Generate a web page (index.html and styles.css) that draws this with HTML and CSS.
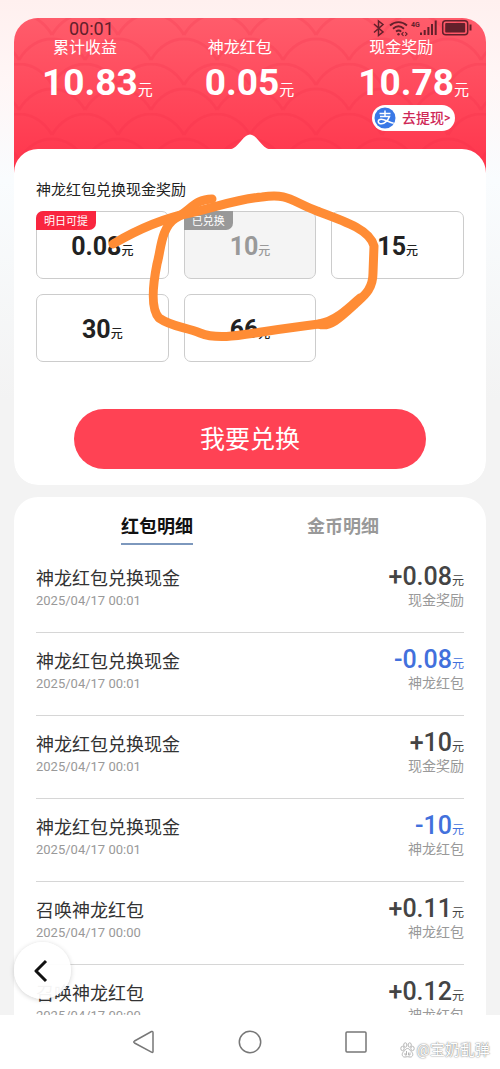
FILE: index.html
```html
<!DOCTYPE html>
<html lang="zh-CN">
<head>
<meta charset="utf-8">
<meta name="viewport" content="width=device-width, initial-scale=1">
<title>神龙红包</title>
<link rel="stylesheet" href="styles.css">
</head>
<body>
<div class="status">
  <span class="clock">00:01</span>
  <svg class="status-icons" width="100" height="20" viewBox="0 0 100 20" fill="none" stroke="#63202b" stroke-width="1.5">
    <path d="M1 6l9 8-4.500 3.500V3L10 6.500l-9 8"/>
    <path d="M17 7.500c5-4.500 12-4.500 17 0M20 10.700c3.500-3 7.500-3 11 0M23 13.600c2-1.500 3.500-1.500 5.200 0" stroke-width="1.900"/>
    <circle cx="25.500" cy="16.300" r="1.200" fill="#63202b" stroke="none"/>
    <path d="M30.500 14.200l-1.800 1.800 1.800 1.800M32.300 14.200l1.800 1.800-1.800 1.800" stroke-width="1.100"/>
    <text x="38" y="9" class="net">4G</text>
    <path d="M48 14.500V17M51.700 12V17M55.400 9V17M59 6V17M62.700 2.500V17" stroke-width="2"/>
    <rect x="69.700" y="2.700" width="25" height="14" rx="3"/>
    <rect x="72.200" y="5" width="20" height="9.500" rx="1" fill="#63202b" stroke="none"/>
    <path d="M97.500 6.500v6" stroke-width="2"/>
  </svg>
</div>

<main class="screen">
  <section class="card wallet">
    <svg class="scales" aria-hidden="true">
      <defs>
        <pattern id="scale" width="66" height="50" patternUnits="userSpaceOnUse" x="38" y="-5">
          <path d="M0 22C16-6 50-6 66 22M-33 47C-17 19 17 19 33 47M33 47C49 19 83 19 99 47" fill="none" stroke="#ed2440" stroke-opacity=".17" stroke-width="3"/>
        </pattern>
      </defs>
      <rect width="100%" height="100%" fill="url(#scale)"/>
    </svg>
    <header class="totals">
      <div class="total"><span class="label">累计收益</span><span class="sum">10.83<small>元</small></span></div>
      <div class="total middle"><span class="label">神龙红包</span><span class="sum">0.05<small>元</small></span></div>
      <div class="total">
        <span class="label">现金奖励</span><span class="sum">10.78<small>元</small></span>
        <a class="withdraw" href="#">
          <svg width="22" height="22" viewBox="0 0 22 22"><circle cx="11" cy="11" r="10.500" fill="#3978e6"/><path d="M5.500 6.500h11M11 3.500v6M6 9.500h9.500c-1.500 4-5 7.300-8 7.300-4.500 0-4-4.600-.3-4.600 3.800 0 7 2.800 12.500 4" fill="none" stroke="#fff" stroke-width="1.500"/></svg>
          <span>去提现</span><span class="more">&gt;</span>
        </a>
      </div>
    </header>
    <svg class="notch" width="48" height="16" viewBox="0 0 48 16"><path d="M0 16C11 16 14 6 20 2Q24-1 28 2C34 6 37 16 48 16Z" fill="#fff"/></svg>
    <div class="exchange">
      <h2>神龙红包兑换现金奖励</h2>
      <div class="options">
        <button type="button" class="option"><em class="tag">明日可提</em>0.08<small>元</small></button>
        <button type="button" class="option used" disabled><em class="tag">已兑换</em>10<small>元</small></button>
        <button type="button" class="option">15<small>元</small></button>
        <button type="button" class="option">30<small>元</small></button>
        <button type="button" class="option">66<small>元</small></button>
      </div>
      <button type="button" class="redeem">我要兑换</button>
    </div>
    <svg class="marker" width="280" height="170" viewBox="0 0 280 170" fill="none" stroke="#ff8c35" stroke-width="9" stroke-linecap="round" stroke-linejoin="round">
      <path d="M13 59C40 43 65 33 90 28C117 22 137 14 162 12C188 8 191 16 217 26C247 37 270 45 274 61L273 88C273 106 262 112 254 120C240 133 229 143 219 139"/>
      <path d="M112 14C95 14 90 26 76 33C61 42 61 65 57 79C53 99 50 123 59 133C72 142 85 142 100 148C123 157 150 147 219 139C236 136 249 123 260 113"/>
    </svg>
  </section>

  <section class="card history">
    <nav class="tabs">
      <button type="button" class="tab active">红包明细</button>
      <button type="button" class="tab">金币明细</button>
    </nav>
    <ul class="rows">
      <li><div><h3>神龙红包兑换现金</h3><time>2025/04/17 00:01</time></div><div class="right"><b>+0.08<small>元</small></b><span>现金奖励</span></div></li>
      <li><div><h3>神龙红包兑换现金</h3><time>2025/04/17 00:01</time></div><div class="right minus"><b>-0.08<small>元</small></b><span>神龙红包</span></div></li>
      <li><div><h3>神龙红包兑换现金</h3><time>2025/04/17 00:01</time></div><div class="right"><b>+10<small>元</small></b><span>现金奖励</span></div></li>
      <li><div><h3>神龙红包兑换现金</h3><time>2025/04/17 00:01</time></div><div class="right minus"><b>-10<small>元</small></b><span>神龙红包</span></div></li>
      <li><div><h3>召唤神龙红包</h3><time>2025/04/17 00:00</time></div><div class="right"><b>+0.11<small>元</small></b><span>神龙红包</span></div></li>
      <li><div><h3>召唤神龙红包</h3><time>2025/04/17 00:00</time></div><div class="right"><b>+0.12<small>元</small></b><span>神龙红包</span></div></li>
    </ul>
  </section>

  <button type="button" class="back" aria-label="返回"><svg width="14" height="24" viewBox="0 0 14 24"><path d="M12 2L2 12l10 10" fill="none" stroke="#111" stroke-width="3" stroke-linejoin="round"/></svg></button>
</main>

<footer class="system">
  <div class="keys">
    <button type="button" aria-label="后退"><svg width="24" height="24" viewBox="0 0 24 24"><path d="M2.500 11L19.500 1.500Q21 1 21 2.500v19Q21 23 19.500 22.200L2.500 13Q1 12 2.500 11Z"/></svg></button>
    <button type="button" aria-label="主页"><svg width="24" height="24" viewBox="0 0 24 24"><circle cx="12" cy="12" r="10.700"/></svg></button>
    <button type="button" aria-label="最近任务"><svg width="24" height="24" viewBox="0 0 24 24"><rect x="2" y="2" width="20" height="20" rx="1"/></svg></button>
  </div>
  <div class="watermark">
    <svg width="15" height="16" viewBox="0 0 15 16" fill="#fff" stroke="#b5b5b5"><ellipse cx="2.500" cy="6.500" rx="1.700" ry="2.200"/><ellipse cx="5.300" cy="3" rx="1.600" ry="2.200"/><ellipse cx="9.700" cy="3" rx="1.600" ry="2.200"/><ellipse cx="12.500" cy="6.500" rx="1.700" ry="2.200"/><path d="M7.500 6.500c2 0 2.500 2 4 3.300 2.500 2.300 1 5.700-1.500 5.200-2-.4-3-.4-5 0-2.500.5-4-2.900-1.500-5.200 1.500-1.300 2-3.300 4-3.300Z"/><path d="M6.500 9v4M5 11v2h1.500M8.500 10.500V13H10v-2.500" fill="none"/></svg>
    <span>@宝奶乱弹</span>
  </div>
</footer>
</body>
</html>
```
FILE: styles.css
```css
* { box-sizing: border-box; }

body {
  margin: 0;
  height: 100vh;
  display: flex;
  flex-direction: column;
  position: relative;
  background: #fff;
  color: #222;
  font-family: Roboto, "Noto Sans CJK SC", sans-serif;
}

h2, h3, ul { margin: 0; padding: 0; font-weight: 400; }
button { font: inherit; border: 0; padding: 0; background: none; color: inherit; }
small { line-height: 1; }
svg { flex: none; }

.status {
  position: absolute;
  z-index: 3;
  top: 18px;
  left: 69px;
  right: 27px;
  display: flex;
  justify-content: space-between;
  color: #63202b;
}
.clock { font-size: 18px; line-height: 22px; }
.net { font: 700 7px Roboto, sans-serif; fill: #63202b; stroke: none; }

.screen {
  position: relative;
  flex: 1;
  min-height: 0;
  overflow: hidden;
  padding: 18px 14px 0;
  display: flex;
  flex-direction: column;
  gap: 12px;
  background: linear-gradient(#fff0ef 0, #fff6f6 80px, #f9fcfe 180px, #f3f3f3 400px);
}

.card { position: relative; flex: none; border-radius: 24px; }

.wallet {
  overflow: hidden;
  background: linear-gradient(#ff5c6b, #ff344b) top / 100% 155px no-repeat;
}
.scales { position: absolute; top: 0; left: 0; width: 100%; height: 155px; }

.totals {
  position: relative;
  height: 131px;
  display: flex;
  justify-content: space-between;
  padding: 20px 17px 0 28px;
  color: #fff;
}
.total { display: flex; flex-direction: column; align-items: center; }
.middle { margin-right: 12px; }
.label {
  align-self: flex-start;
  margin-left: 11px;
  font-size: 16px;
  line-height: 20px;
}
.middle .label { margin-left: 3px; }
.sum {
  margin-top: 3px;
  font-size: 37px;
  font-weight: 700;
  line-height: 44px;
}
.sum small { font-size: 15px; font-weight: 400; }

.withdraw {
  display: flex;
  align-items: center;
  height: 26px;
  padding: 0 5px 0 2px;
  border-radius: 13px;
  background: #fff;
  color: #cf2857;
  font-size: 14px;
  font-weight: 500;
  line-height: 20px;
  text-decoration: none;
}
.withdraw svg { margin-right: 6px; }
.more { font-size: 12px; }

.notch { position: absolute; z-index: 1; top: 116px; left: 50%; margin-left: -24px; }

.exchange {
  position: relative;
  padding: 29px 22px 16px;
  border-radius: 24px;
  background: #fff;
  display: flex;
  flex-direction: column;
}
.exchange h2 { font-size: 15px; line-height: 24px; }

.options {
  display: grid;
  grid-template-columns: repeat(3, 1fr);
  gap: 15px;
  margin-top: 9px;
}
.option {
  position: relative;
  height: 68px;
  padding-top: 3px;
  border: 1px solid #ccc;
  border-radius: 7px;
  font-size: 25px;
  font-weight: 700;
  line-height: 36px;
}
.option small { font-size: 12px; font-weight: 500; }
.used { background: #f4f4f4; color: #999; }
.tag {
  position: absolute;
  top: -1px;
  left: -1px;
  padding: 0 8px;
  border-radius: 7px 0 7px 0;
  background: #f9263f;
  color: #fff;
  font: 400 11px/19px "Noto Sans CJK SC", sans-serif;
}
.used .tag { background: #999; }

.redeem {
  margin: 47px 38px 0;
  height: 60px;
  padding-bottom: 4px;
  border-radius: 30px;
  background: #ff4254;
  color: #fff;
  font-size: 25px;
}

.marker { position: absolute; z-index: 2; top: 167px; left: 50%; margin-left: -150px; }

.history { background: #fff; padding: 15px 22px 0; }
.tabs { display: flex; justify-content: center; gap: 114px; }
.tab {
  height: 33px;
  padding-bottom: 3px;
  font-size: 18px;
  line-height: 28px;
  font-weight: 700;
  color: #999;
}
.tab.active { padding-bottom: 1px; color: #111; border-bottom: 2px solid #7d98bd; }

.rows { list-style: none; }
.rows li {
  display: flex;
  justify-content: space-between;
  height: 83px;
  padding-top: 14px;
  border-bottom: 1px solid #d6d6d6;
}
.rows li:first-child { height: 88px; padding-top: 19px; }
.rows h3 { font-size: 18px; line-height: 30px; color: #333; }
.rows time { display: block; font-size: 13px; line-height: 14px; color: #999; }
.right { display: flex; flex-direction: column; align-items: flex-end; }
.right b { font-size: 25px; line-height: 26px; font-weight: 500; color: #444; }
.right b small { font-size: 12px; font-weight: 400; }
.right span { font-size: 14px; line-height: 20px; color: #999; }
.right.minus b { color: #4270dc; }

.back {
  position: absolute;
  z-index: 2;
  left: 14px;
  bottom: 16px;
  width: 57px;
  height: 57px;
  border-radius: 50%;
  background: rgba(255, 255, 255, .95);
  box-shadow: 0 1px 5px rgba(0, 0, 0, .18);
  display: grid;
  place-items: center;
}
.back svg { margin-right: 3px; }

.system {
  position: relative;
  flex: none;
  height: 54px;
  background: #fff;
}
.keys { display: flex; justify-content: center; gap: 82px; padding-top: 15px; }
.keys svg { display: block; fill: none; stroke: #777; stroke-width: 1.500; }
.watermark {
  position: absolute;
  right: 10px;
  bottom: 8px;
  display: flex;
  align-items: center;
  gap: 2px;
  color: #fff;
  font-size: 15px;
  line-height: 22px;
  text-shadow: 0 0 1px #777, 0 0 2px #999;
}
```
